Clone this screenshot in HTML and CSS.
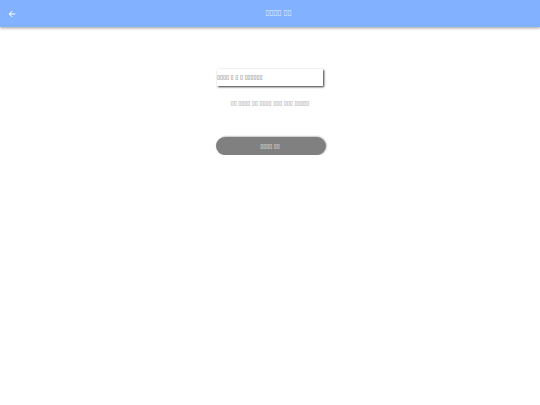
FILE: index.html
```html
<!DOCTYPE html>
<html lang="ko">
  <head>
    <meta charset="UTF-8" />
    <meta name="viewport" content="width=device-width, initial-scale=1.0" />
    <title>▯▯▯▯ ▯▯</title>
    <link rel="stylesheet" href="styles.css">
  </head>
  <body>
    <header class="header">
      <a href="#" class="back" aria-label="Back">
        <svg viewBox="0 0 24 24" width="10" height="10">
          <path fill="currentColor" d="M20 11H7.83l5.59-5.59L12 4l-8 8 8 8 1.41-1.41L7.83 13H20v-2z" />
        </svg>
      </a>
      <h1 class="title">▯▯▯▯ ▯▯</h1>
    </header>
    <form class="form">
      <input type="text" class="field" aria-label="▯▯▯▯" placeholder="▯▯▯▯ ▯ ▯ ▯ ▯▯▯▯▯▯" />
      <p class="hint">▯▯ ▯▯▯▯ ▯▯ ▯▯▯▯ ▯▯▯ ▯▯▯ ▯▯▯▯▯</p>
      <button type="button" class="btn">▯▯▯▯ ▯▯</button>
    </form>
  </body>
</html>
```

FILE: styles.css
```css
body {
  font-family: "DejaVu Sans Condensed", "DejaVu Sans", sans-serif;
  margin: 0;
  background-color: #fff;
}

.header {
  display: flex;
  align-items: center;
  height: 27px;
  padding-left: 7px;
  background-color: #82b1ff;
  color: #fff;
  box-shadow: 0 1px 3px rgba(0, 0, 0, 0.4);
}

.back {
  display: flex;
  color: #fff;
}

.title {
  flex: 1;
  margin: 0;
  padding-bottom: 2px;
  color: #e3edff;
  font-size: 8px;
  font-weight: normal;
  text-align: center;
}

.form {
  display: flex;
  flex-direction: column;
  align-items: center;
  padding-top: 42px;
}

.field {
  box-sizing: border-box;
  width: 106px;
  height: 17px;
  padding: 0 0 2px;
  border: none;
  font-family: inherit;
  font-size: 6px;
  box-shadow: 1px 1px 2px #333;
}

.field::placeholder {
  color: #555;
}

.hint {
  margin: 14px 0 31px;
  font-size: 6px;
  line-height: 6px;
  color: #777;
}

.btn {
  box-sizing: border-box;
  width: 109px;
  height: 18px;
  padding: 0 0 2px;
  border: none;
  border-radius: 9px;
  background-color: #808080;
  color: #fff;
  font-family: inherit;
  font-size: 6px;
  box-shadow: 1px 0 2px #555;
}
```
